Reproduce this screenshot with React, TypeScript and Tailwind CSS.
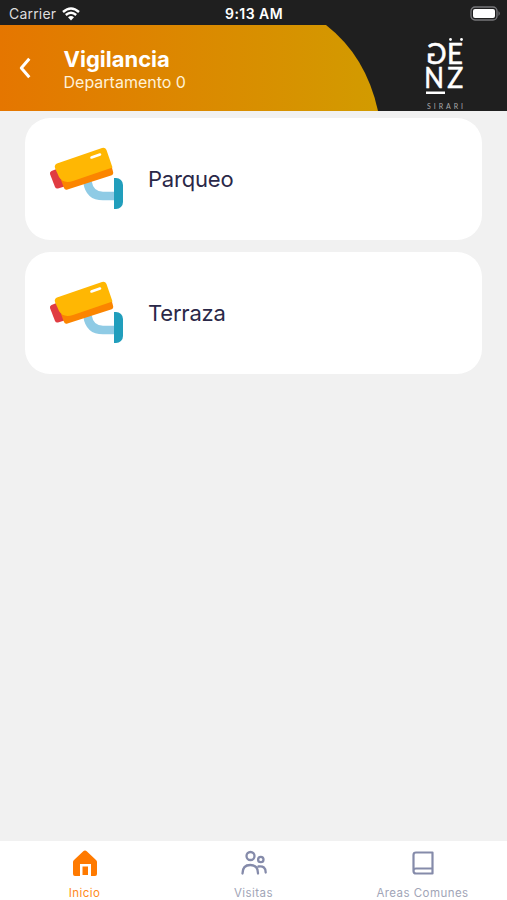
const CameraIcon = () => (
	<svg viewBox="0 0 76 64" className="h-16 w-[76px] shrink-0">
		<path
			d="M38.500 35C40 45 46 49 54 49H66"
			fill="none"
			stroke="#8fcbe5"
			strokeWidth="8.5"
		/>
		<path
			d="M65 31H67A7 7 0 0 1 74 38V55A7 7 0 0 1 67 62H65Z"
			fill="#219ebc"
		/>
		<path
			d="M5 23L2.500 24Q.5 25 1 27L6 40Q7 42 9 41.500L17 39L10 21Z"
			fill="#e03c42"
		/>
		<path
			d="M12 33L15 41Q16 43.500 18.500 42.500L62 28.500Q65 27.500 64 24.500L62.500 19Z"
			fill="#fb8500"
		/>
		<path
			d="M8 16.500L53 1Q56 0 57.500 3L63.500 20.500L24 34Q14 37 10 30L6 21Q5 18 8 16.500Z"
			fill="#ffb703"
		/>
		<path
			d="M42.500 10.500L51 7.500"
			stroke="#fff"
			strokeWidth="2.600"
			strokeLinecap="round"
		/>
	</svg>
);

const Logo = () => (
	<svg
		viewBox="0 0 44 76"
		className="absolute top-[36px] left-[423px] h-[76px] w-11 fill-white font-['Lato','Noto_Sans',sans-serif]"
	>
		<g fontSize="28" stroke="#fff" strokeWidth=".6">
			<text transform="translate(23.400 27.700) scale(-.97 1)">G</text>
			<text transform="translate(24 27.700) scale(.98 1)">E</text>
			<text transform="translate(1.300 51.800) scale(.92 1)">N</text>
			<text transform="translate(24.200 51.800) scale(.95 1)">Z</text>
		</g>
		<circle cx="27.500" cy="3.500" r="1.400" />
		<circle cx="38.500" cy="3.500" r="1.400" />
		<path d="M3 55.500H22V58H3Z" />
		<text x="4" y="72.500" fontSize="7" textLength="36" className="fill-[#aaa]">
			SIRARI
		</text>
	</svg>
);

const StatusBar = () => (
	<div className="flex relative justify-between items-center px-[9px] h-[25px] text-white">
		<div className="flex gap-[6px] items-center pt-[2px]">
			<span className="text-[14px] text-[#ddd] tracking-[0.2px]">Carrier</span>
			<svg viewBox="0 0 18 14" className="h-[14px] w-[18px]" fill="none">
				<path
					d="M1 5Q9 -2 17 5M3.800 8Q9 3.500 14.200 8"
					stroke="#fff"
					strokeWidth="2.400"
				/>
				<path d="M6 10.300Q9 7.800 12 10.300L9 13.500Z" fill="#fff" />
			</svg>
		</div>
		<span className="absolute top-[4px] left-[225px] text-[14px] font-semibold leading-5 tracking-[0.45px] whitespace-nowrap">
			9:13 AM
		</span>
		<svg viewBox="0 0 32 15" className="mt-[1px] -mr-[4px] h-[15px] w-8">
			<rect
				x="1"
				y="1"
				width="26"
				height="13"
				rx="4"
				fill="none"
				stroke="#77777a"
				strokeWidth="1.300"
			/>
			<rect x="3" y="3" width="22" height="9" rx="2" fill="#fff" />
			<path d="M28.500 5Q31 7.500 28.500 10Z" fill="#77777a" />
		</svg>
	</div>
);

const Header = () => (
	<header className="relative h-[111px] shrink-0 bg-[#1f1f1f]">
		<StatusBar />

		<div className="flex relative items-center h-[86px]">
			<svg viewBox="0 0 507 86" className="absolute inset-0 h-[86px] w-[507px]">
				<defs>
					<linearGradient id="header" x1="0" x2="1">
						<stop stopColor="#e57600" />
						<stop offset="1" stopColor="#d29b00" />
					</linearGradient>
				</defs>
				<path
					d="M0 0H326Q366 31 378 86H0Z"
					fill="url(#header)"
				/>
			</svg>
			<svg viewBox="0 0 12 22" className="relative ml-[19px] h-[22px] w-3">
				<path
					d="M10.300 1.800L2.300 11L10.300 20.200"
					fill="none"
					stroke="#fff"
					strokeWidth="3"
					strokeLinejoin="round"
				/>
			</svg>
			<div className="relative pt-[3px] ml-[32.5px]">
				<h1 className="text-[22px] font-bold text-white leading-[25px]">
					Vigilancia
				</h1>
				<p className="text-[16px] text-[#fff1d7] leading-5">Departamento 0</p>
			</div>
		</div>

		<Logo />
	</header>
);

const CameraCard = ({ name }: { name: string }) => (
	<div className="flex gap-[23px] items-center pl-6 h-[122px] bg-white rounded-[25px]">
		<CameraIcon />
		<span className="text-[22px] tracking-[-0.2px] text-[#2a2848]">
			{name}
		</span>
	</div>
);

const HomeIcon = () => (
	<svg viewBox="0 0 24 27" className="h-[27px] w-6">
		<path
			d="M12 .5Q13 .5 14 1.500L23 10Q24 11 24 12V24Q24 26 22 26H18V14H7V26H2Q0 26 0 24V12Q0 11 1 10L10 1.500Q11 .5 12 .5Z"
			fill="#ff7a00"
		/>
		<path d="M9.500 16.500H15V25H9.500Z" fill="#ff7a00" />
	</svg>
);

const VisitorsIcon = () => (
	<svg
		viewBox="0 0 26 26"
		className="w-[26px] h-[26px]"
		fill="none"
		stroke="#858baa"
		strokeWidth="2.300"
		strokeLinecap="round"
	>
		<circle cx="9.500" cy="6" r="4" />
		<circle cx="19.800" cy="9.500" r="2.700" />
		<path d="M1.500 23.500Q1.500 15 9.300 15T17 23.500M17.500 16.500Q24.700 15.500 24.700 22.500" />
	</svg>
);

const BookIcon = () => (
	<svg
		viewBox="0 0 22 24"
		className="h-6 w-[22px]"
		fill="none"
		stroke="#858baa"
		strokeWidth="2.200"
		strokeLinejoin="round"
	>
		<path d="M4 1.500H20.500V22.500H4Q1.500 22.500 1.500 20V4Q1.500 1.500 4 1.500ZM1.500 20Q1.500 17.500 4 17.500H20.500" />
	</svg>
);

const tabs = [
	{ label: 'Inicio', icon: <HomeIcon />, color: 'text-[#ff8a20]' },
	{ label: 'Visitas', icon: <VisitorsIcon />, color: 'text-[#a1a5b7]' },
	{ label: 'Areas Comunes', icon: <BookIcon />, color: 'text-[#a1a5b7]' }
];

const App = () => (
	<div className="flex overflow-hidden flex-col h-[900px] w-[507px] bg-[#f1f1f1] font-['Inter','Liberation_Sans',sans-serif]">
		<Header />

		<main className="flex flex-col gap-3 px-[25px] pt-[7px] grow">
			<CameraCard name="Parqueo" />
			<CameraCard name="Terraza" />
		</main>

		<nav className="grid grid-cols-3 h-[59px] shrink-0 bg-white">
			{tabs.map(({ label, icon, color }) => (
				<div key={label} className="flex flex-col items-center pt-2">
					<div className="flex items-center h-7">{icon}</div>
					<span
						className={`mt-[8px] text-[11.5px] leading-4 tracking-[0.45px] ${color}`}
					>
						{label}
					</span>
				</div>
			))}
		</nav>
	</div>
);

export default App;
